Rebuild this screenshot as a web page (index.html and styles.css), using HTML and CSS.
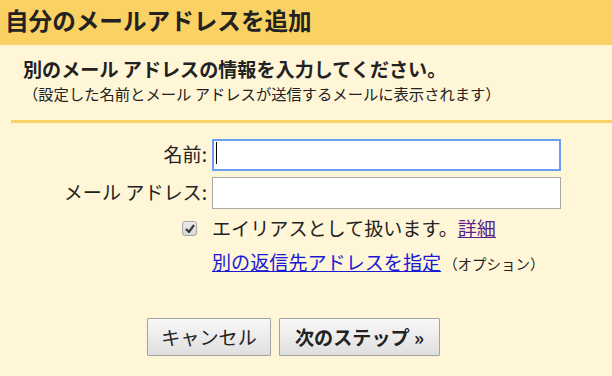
FILE: index.html
```html
<!DOCTYPE html>
<html lang="ja">
<head>
  <meta charset="UTF-8">
  <meta name="viewport" content="width=device-width, initial-scale=1.0">
  <title>自分のメールアドレスを追加</title>
  <link rel="stylesheet" href="styles.css">
</head>
<body>
  <div class="dialog-header">
    <h1>自分のメールアドレスを追加</h1>
  </div>

  <div class="intro">
    <h2>別のメール アドレスの情報を入力してください。</h2>
    <p>（設定した名前とメール アドレスが送信するメールに表示されます）</p>
  </div>
  <div class="separator"></div>

  <form class="address-form">
    <label for="name">名前:</label>
    <div class="field">
      <input type="text" id="name" class="focused">
      <span class="caret"></span>
    </div>

    <label for="email">メール アドレス:</label>
    <div class="field">
      <input type="text" id="email">
    </div>

    <span class="check-box">
      <svg width="10" height="9" viewBox="0 0 10 9"><path d="M1 5 L4 8 L9 1" fill="none" stroke="#3a3a3a" stroke-width="2.2"/></svg>
    </span>
    <div class="option-text">エイリアスとして扱います。<a href="#" class="visited">詳細</a></div>

    <span></span>
    <div class="option-text"><a href="#">別の返信先アドレスを指定</a><span class="note">（オプション）</span></div>
  </form>

  <div class="buttons">
    <button type="button" class="cancel">キャンセル</button>
    <button type="button" class="primary">次のステップ »</button>
  </div>
</body>
</html>
```

FILE: styles.css
```css
body {
  margin: 0;
  background: #fff6d7;
  font-family: "Noto Sans CJK JP", "Noto Sans", sans-serif;
  color: #222;
}

.dialog-header {
  background: #fad163;
  height: 45px;
  padding-left: 5px;
}

.dialog-header h1 {
  margin: 0;
  font-size: 23.6px;
  line-height: 40px;
  font-weight: bold;
  color: #222;
}

.intro {
  padding: 11px 0 0 23px;
}

.intro h2 {
  margin: 0;
  font-size: 19.1px;
  line-height: 26px;
  font-weight: bold;
}

.intro p {
  margin: 0;
  font-size: 15.3px;
  line-height: 22px;
}

.separator {
  margin: 16px 0 0 11px;
  height: 3px;
  background: #fad163;
}

.address-form {
  display: grid;
  grid-template-columns: 207px 349px;
  column-gap: 5px;
  row-gap: 6px;
  margin-top: 15px;
  font-size: 19.1px;
  align-items: center;
}

.address-form label {
  text-align: right;
  line-height: 32px;
}

.field {
  position: relative;
  height: 32px;
}

.field input {
  box-sizing: border-box;
  width: 100%;
  height: 32px;
  margin: 0;
  border: 1px solid #a9a9a9;
  background: #fff;
  outline: none;
  font-size: 16px;
}

.field input.focused {
  border: 2px solid #6b9ef2;
}

.caret {
  position: absolute;
  left: 4px;
  top: 4px;
  width: 1px;
  height: 22px;
  background: #000;
}

.check-box {
  justify-self: end;
  margin-right: 10px;
  box-sizing: border-box;
  width: 15px;
  height: 15px;
  border: 1px solid #a8a8a8;
  border-radius: 3px;
  background: linear-gradient(#ececec, #d8d8d8);
  display: flex;
  align-items: center;
  justify-content: center;
}

.option-text {
  line-height: 28px;
  white-space: nowrap;
}

.option-text a {
  color: #1a1ad6;
}

.option-text a.visited {
  color: #5a1f8f;
}

.note {
  font-size: 14.5px;
  margin-left: 2px;
}

.buttons {
  display: flex;
  gap: 8px;
  margin: 40px 0 0 147px;
}

.buttons button {
  box-sizing: border-box;
  height: 38px;
  padding: 0;
  border: 1px solid #a3a3a3;
  border-radius: 1px;
  background: linear-gradient(#f8f8f8, #dfdfdf);
  font-family: "Noto Sans CJK JP", "Noto Sans", sans-serif;
  font-size: 19.1px;
  color: #222;
}

.buttons button.cancel {
  width: 124px;
}

.buttons button.primary {
  font-weight: bold;
  width: 161px;
}
```
